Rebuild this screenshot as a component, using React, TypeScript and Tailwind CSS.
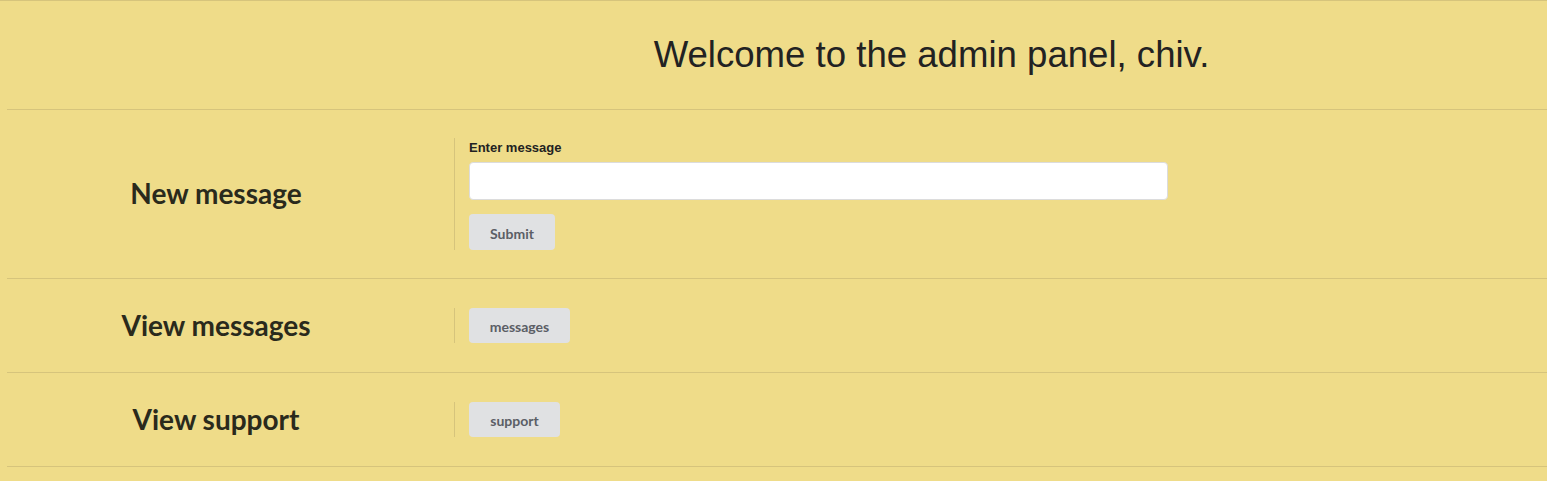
export default function App() {
  const rows = [
    { title: 'View messages', button: 'messages', w: 'w-[101px]' },
    { title: 'View support', button: 'support', w: 'w-[91px]' },
  ];

  return (
    <div className="min-h-[481px] w-full bg-[#efdc89] border-t border-[#d6c47c]">
      {/* Header */}
      <div className="ml-[7px] border-b border-[#d6c47c] h-[109px] flex items-center justify-center pl-[309px]">
        <h1 className="font-['Liberation_Sans',Arial,sans-serif] text-[36.6px] text-[#222222] leading-none">
          Welcome to the admin panel, chiv.
        </h1>
      </div>

      {/* New message */}
      <div className="ml-[7px] border-b border-[#d6c47c] flex items-center py-[28px]">
        <div className="w-[418px] text-center font-['Lato',sans-serif] font-bold text-[28px] leading-[34px] text-[#2a2a1c] mb-[2px]">
          New message
        </div>
        <div className="ml-[29px] border-l border-[#d6c47c] pl-[14px] flex flex-col">
          <label className="font-['Liberation_Sans',Arial,sans-serif] font-bold text-[13px] text-[#222222] leading-[16px] mt-[2px]">
            Enter message
          </label>
          <input
            type="text"
            className="mt-[6px] w-[699px] h-[38px] bg-white border border-[#dcdcdc] rounded-[4px] outline-none px-3"
          />
          <button className="mt-[14px] w-[86px] h-[36px] pt-[2px] rounded-[4px] bg-[#e0e1e3] font-['Lato',sans-serif] font-bold text-[14px] text-[#5b5e66]">
            Submit
          </button>
        </div>
      </div>

      {rows.map((r) => (
        <div
          key={r.title}
          className="ml-[7px] border-b border-[#d6c47c] flex items-center py-[29px]"
        >
          <div className="w-[418px] text-center font-['Lato',sans-serif] font-bold text-[28px] leading-[35px] text-[#2a2a1c]">
            {r.title}
          </div>
          <div className="ml-[29px] border-l border-[#d6c47c] pl-[14px] flex">
            <button
              className={`${r.w} h-[35px] pt-[2px] rounded-[4px] bg-[#e0e1e3] font-['Lato',sans-serif] font-bold text-[14px] text-[#5b5e66]`}
            >
              {r.button}
            </button>
          </div>
        </div>
      ))}
    </div>
  );
}
